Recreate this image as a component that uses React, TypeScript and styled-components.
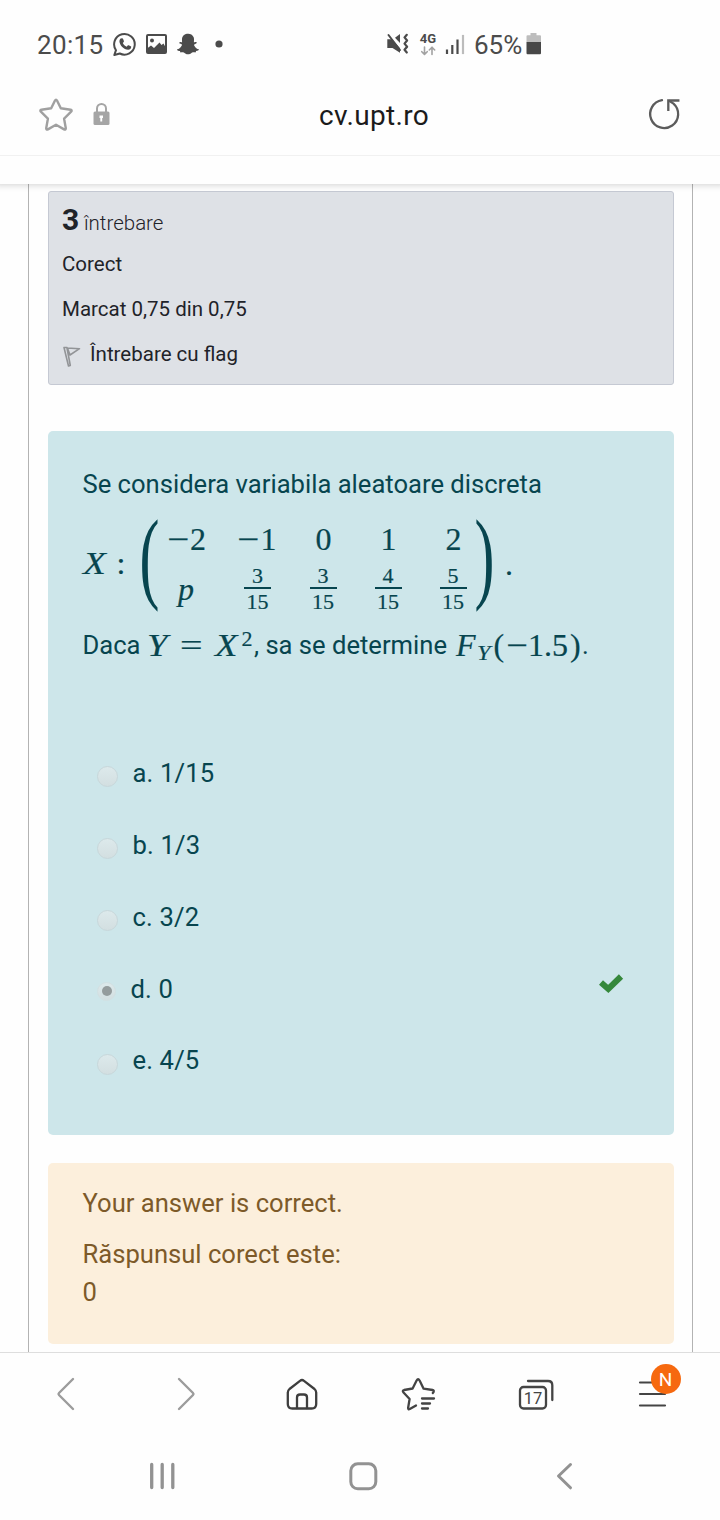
import React from "react";
import styled, { createGlobalStyle } from "styled-components";
import { FaSnapchatGhost } from "react-icons/fa";

const GlobalStyle = createGlobalStyle`
  * { box-sizing: border-box; }
  body { margin: 0; background: #fefefe; font-family: Roboto, "Liberation Sans", sans-serif; }
`;

const Screen = styled.div`
  width: 720px;
  height: 1520px;
  display: flex;
  flex-direction: column;
  overflow: hidden;
  background: #fefefe;
`;

const StatusBar = styled.div`
  height: 88px;
  flex: none;
  display: flex;
  align-items: center;
  padding-left: 37px;
  color: #4b4b4b;
`;

const StatusText = styled.span<{ $w: number; $ls?: number; $ml?: number }>`
  width: ${(p) => p.$w}px;
  margin: 2px 0 0 ${(p) => p.$ml ?? 0}px;
  font-size: 26px;
  line-height: 30px;
  letter-spacing: ${(p) => p.$ls ?? 0}px;
  white-space: nowrap;
`;

const Svg = styled.svg<{ $ml?: number }>`
  display: block;
  flex: none;
  margin-left: ${(p) => p.$ml ?? 0}px;
  fill: none;
  stroke-linecap: round;
  stroke-linejoin: round;
`;

const SnapIcon = styled(FaSnapchatGhost)`
  flex: none;
  width: 24px;
  height: 22px;
  margin: 0 0 0 8px;
`;

const Network = styled.div`
  width: 20px;
  height: 24px;
  margin: 0 2px 0 8px;
  display: flex;
  flex-direction: column;
  align-items: center;
  font-size: 13px;
  font-weight: 700;
  line-height: 13px;
`;

const AddressBar = styled.div`
  height: 67px;
  flex: none;
  display: flex;
  align-items: flex-start;
  padding: 8px 0 0 36px;
`;

const Address = styled.span`
  width: 112px;
  margin-left: 207px;
  font-size: 28px;
  line-height: 40px;
  letter-spacing: 0.35px;
  color: #1b1b1b;
  white-space: nowrap;
`;

const ToolbarEdge = styled.div`
  height: 29px;
  flex: none;
  margin: 0 -10px;
  border-top: 1px solid #f1f1f1;
  box-shadow: 0 6px 7px -5px rgba(0, 0, 0, 0.18);
  background: #fefefe;
  position: relative;
`;

const Page = styled.main`
  height: 1168px;
  flex: none;
  margin: 0 27px 0 28px;
  padding: 7px 18px 0 18px;
  border: solid #b3b3b3;
  border-width: 0 1px;
`;

const InfoPanel = styled.section`
  height: 194px;
  margin-left: 0.5px;
  padding: 6px 13.5px;
  border: 1px solid #c5c9d3;
  border-radius: 3px;
  background: #dee1e6;
  color: #1f2329;
  font-size: 20.5px;
`;

const InfoLine = styled.div`
  height: 45px;
  line-height: 45px;
  display: flex;
  align-items: center;
  white-space: nowrap;
`;

const InfoTitle = styled.div`
  height: 44px;
  line-height: 43px;
  white-space: nowrap;
`;

const QuestionNumber = styled.b`
  display: inline-block;
  width: 22px;
  font-size: 30px;
`;

const QuestionLabel = styled.span`
  font-weight: 300;
`;

const QuestionPanel = styled.section`
  height: 704px;
  margin: 46px 0 0 1px;
  padding: 33px 34.5px 0;
  border-radius: 5px;
  background: #cde6ea;
  color: #07454f;
  font-size: 25.6px;
`;

const Line = styled.div<{ $h: number }>`
  height: ${(p) => p.$h}px;
  line-height: ${(p) => p.$h}px;
  white-space: nowrap;
  display: flex;
  align-items: baseline;
`;

const Piece = styled.span<{ $w: number }>`
  width: ${(p) => p.$w}px;
  flex: none;
`;

const MathPiece = styled(Piece)<{ $italic?: boolean; $size?: number; $shift?: number; $stretch?: number }>`
  font-family: "Liberation Serif", serif;
  font-style: ${(p) => (p.$italic ? "italic" : "normal")};
  font-size: ${(p) => p.$size ?? 32}px;
  line-height: 1;
  -webkit-text-stroke: 0.2px currentColor;
  transform-origin: 0 50%;
  transform: translateY(${(p) => p.$shift ?? 1.5}px) scaleX(${(p) => p.$stretch ?? 1});
`;

const MatrixRow = styled.div`
  height: 122px;
  display: flex;
  align-items: center;
`;

const Paren = styled.span`
  width: 24px;
  height: 122px;
  flex: none;
  display: flex;
  justify-content: center;
  font-family: "Liberation Serif", serif;
  font-size: 52px;
  line-height: 122px;
  transform: translate(-2.5px, -8.5px) scale(1.15, 1.96);
`;

const Matrix = styled.div`
  width: 308px;
  height: 94px;
  margin: 4px 0 0 3px;
  flex: none;
  display: grid;
  grid-template-columns: 70.5px 65.5px 65px 65px 42px;
  grid-template-rows: 38px 56px;
  font-family: "Liberation Serif", serif;
  font-size: 32px;
  -webkit-text-stroke: 0.2px currentColor;
`;

const Cell = styled.div<{ $italic?: boolean }>`
  width: 42px;
  line-height: 38px;
  text-align: center;
  white-space: nowrap;
  font-style: ${(p) => (p.$italic ? "italic" : "normal")};
  padding-top: ${(p) => (p.$italic ? 12 : 0)}px;
  padding-right: ${(p) => (p.$italic ? 3 : 0)}px;
`;

const Minus = styled.span`
  display: inline-block;
  margin-right: 3px;
  transform: scaleX(1.22);
`;

const Fraction = styled.div`
  width: 27px;
  margin: 7px 0 0 7px;
  font-size: 22px;
  line-height: 22px;
  text-align: center;
`;

const Denominator = styled.div`
  border-top: 2px solid #07454f;
  padding-top: 2px;
`;

const Period = styled(MathPiece)`
  margin-left: 6.5px;
`;

const Answers = styled.div`
  margin-top: 72px;
`;

const AnswerRow = styled.label`
  height: 71.8px;
  padding-left: 14.5px;
  display: flex;
  align-items: center;
`;

const Radio = styled.span<{ $checked: boolean }>`
  width: ${(p) => (p.$checked ? 19 : 21)}px;
  height: ${(p) => (p.$checked ? 19 : 21)}px;
  margin-top: ${(p) => (p.$checked ? 6 : 8)}px;
  border-radius: 50%;
  border: 1px solid ${(p) => (p.$checked ? "#d2e0e2" : "#c8d7da")};
  background: linear-gradient(#dce9eb, #d3dfe1);
  display: flex;
  align-items: center;
  justify-content: center;
  &::after {
    content: "";
    width: 10px;
    height: 10px;
    border-radius: 50%;
    background: ${(p) => (p.$checked ? "#949c9d" : "transparent")};
  }
`;

const AnswerText = styled.span`
  margin-left: 14.5px;
  width: 84px;
  padding-top: 0.6px;
  letter-spacing: 0.15px;
  white-space: nowrap;
`;

const CheckMark = styled.span`
  margin: 0 0 9px 382px;
`;

const FeedbackPanel = styled.section`
  height: 181px;
  margin: 28px 0 0 1px;
  padding: 21px 34.5px;
  border-radius: 5px;
  background: #fcefdc;
  color: #7d5a29;
  font-size: 25.6px;
`;

const BottomBar = styled.nav`
  height: 86px;
  flex: none;
  border-top: 1px solid #dedede;
  padding: 17px 0 0 50px;
  display: flex;
`;

const MenuButton = styled.div`
  position: relative;
  margin-left: 80px;
  width: 48px;
  height: 44px;
`;

const Badge = styled.span`
  position: absolute;
  left: 14.5px;
  top: -6px;
  width: 30px;
  height: 30px;
  border-radius: 50%;
  background: #f6690f;
  color: #fff;
  font-size: 19px;
  line-height: 31px;
  text-align: center;
`;

const TabCount = styled.text`
  font: 16.5px Roboto, sans-serif;
  fill: #444;
  stroke: none;
`;

const SystemBar = styled.div`
  height: 82px;
  flex: none;
  padding: 22px 0 0 146px;
  display: flex;
`;

type IconProps = {
  box: [number, number, number, number];
  ml?: number;
  color: string;
  sw?: number;
  children: React.ReactNode;
};

const Icon = ({ box, ml, color, sw = 2, children }: IconProps) => (
  <Svg width={box[2]} height={box[3]} viewBox={box.join(" ")} $ml={ml} stroke={color} strokeWidth={sw}>
    {children}
  </Svg>
);

const topRow = [
  { negative: true, digit: "2" },
  { negative: true, digit: "1" },
  { digit: "0" },
  { digit: "1" },
  { digit: "2" },
];
const numerators = ["3", "3", "4", "5"];
const answers = [
  { text: "a. 1/15" },
  { text: "b. 1/3" },
  { text: "c. 3/2" },
  { text: "d. 0", checked: true },
  { text: "e. 4/5" },
];

export default function App() {
  return (
    <Screen>
      <GlobalStyle />
      <StatusBar>
        <StatusText $w={75} $ls={0.35}>20:15</StatusText>
        <Icon box={[112, 32, 26, 24]} color="#4b4b4b">
          <path d="M116 50.2A10.3 10.3 0 1 1 119.8 53.5L114.3 55Z" />
          <path
            d="M120.6 38.6l1.5-.4c.5 0 .8.2 1 .7l.8 2c.1.4 0 .7-.2 1l-.9 1.1c.9 1.8 2 2.8 3.9 3.7l1-1.2c.3-.3.6-.4 1-.2l2 .9c.4.2.6.5.5.9-.2 1.8-1.3 2.7-3 2.7-4.5-.2-8.5-4.3-8.8-8.5 0-1.2.4-2.1 1.2-2.7z"
            fill="#4b4b4b"
            stroke="none"
          />
        </Icon>
        <Icon box={[145, 33, 23, 22]} color="#4b4b4b" ml={7}>
          <rect x="147" y="35" width="19" height="18" rx="1" />
          <circle cx="152" cy="40.5" r="2" fill="#4b4b4b" stroke="none" />
          <path d="M147 53v-4.500l4-3 3 2.500 5.500-5.500 2 2.500 2-1.500 2.500 4.500v5z" fill="#4b4b4b" stroke="none" />
        </Icon>
        <SnapIcon />
        <Icon box={[214, 39, 10, 10]} color="none" ml={14}>
          <circle cx="219" cy="44" r="3.6" fill="#4b4b4b" />
        </Icon>
        <Icon box={[386, 32, 24, 24]} color="#4b4b4b" ml={162}>
          <path d="M387.300 39.300h4.700l8 9v4.500l-7.500-4.800h-5.200z" fill="#4b4b4b" stroke="none" />
          <path d="M395 37.800l5-3.800v9z" fill="#4b4b4b" stroke="none" />
          <path d="M388.500 35l11.500 15" />
          <path d="M406.800 34.800l-2.300 2.600 2.600 3.100-2.600 3.100 2.600 3.100-2.600 3.100 2.300 2.700" strokeWidth="2.2" />
        </Icon>
        <Network>
          4G
          <Icon box={[420, 45, 17, 11]} color="#a2a2a2" sw={1.6}>
            <path d="M424.500 47v7M421.800 51.700l2.700 2.800 2.700-2.800M432 54.500v-7M429.300 50l2.700-2.800 2.700 2.800" />
          </Icon>
        </Network>
        <Icon box={[445, 33, 21, 22]} color="#4b4b4b" ml={5} sw={2.2}>
          <path d="M447 50.500v2.500M452.300 46v7M457.500 40.500v12.500" strokeLinecap="square" />
          <path d="M463 36v17" stroke="#bcbcbc" strokeLinecap="square" />
        </Icon>
        <StatusText $w={53} $ml={8}>65%</StatusText>
        <Icon box={[526, 33, 16, 22]} color="none" ml={-1}>
          <path d="M530.500 33h6v2.200h3.500q1 0 1 1v6h-14.500v-6q0-1 1-1h3z" fill="#bdbdbd" />
          <path d="M526.500 42h14.500v11q0 1.200-1 1.200h-12.500q-1 0-1-1.200z" fill="#474747" />
        </Icon>
      </StatusBar>

      <AddressBar>
        <Icon box={[36, 96, 40, 36]} color="#a0a0a0" sw={2.4}>
          <path d="M55 100.500q1-1.800 2 0l3.800 7.700 9.800 1.500q1.800.5.500 2l-7 7 1.700 9.500q0 1.900-1.700 1.200L56 124.700l-8.100 4.700q-1.700.7-1.700-1.200l1.700-9.500-7-7q-1.300-1.500.5-2l9.800-1.500z" />
        </Icon>
        <Icon box={[92, 96, 20, 36]} color="#a5a5a5" ml={16}>
          <path d="M97 112v-3.500a4.500 4.500 0 0 1 9 0v3.500" />
          <rect x="93.5" y="111.5" width="16" height="13.5" rx="1.5" fill="#a5a5a5" stroke="none" />
          <path d="M99.500 115.500h3.500v2.500h-.8v3.500h-1.900v-3.500h-.8z" fill="#fff" stroke="none" />
        </Icon>
        <Address>cv.upt.ro</Address>
        <Icon box={[647, 96, 36, 36]} color="#5c5c5c" ml={216} sw={2.3}>
          <path d="M662 100.200A14 14 0 1 0 673.500 103.600L669.500 101" />
          <path d="M678.300 100.500h-10v9.300" strokeLinecap="square" strokeLinejoin="miter" />
        </Icon>
      </AddressBar>
      <ToolbarEdge />

      <Page>
        <InfoPanel>
          <InfoTitle>
            <QuestionNumber>3</QuestionNumber>
            <QuestionLabel>întrebare</QuestionLabel>
          </InfoTitle>
          <InfoLine>Corect</InfoLine>
          <InfoLine>Marcat 0,75 din 0,75</InfoLine>
          <InfoLine>
            <Icon box={[62, 343, 28, 24]} color="#929497" sw={1.6}>
              <path d="M64 347.500l4.500 18.500 1.800-.5-3.300-17.500 12.500.7-9.500 6.300-2.500-6.800M64 347.500h3" />
            </Icon>
            Întrebare cu flag
          </InfoLine>
        </InfoPanel>

        <QuestionPanel>
          <Line $h={40}>Se considera variabila aleatoare discreta</Line>
          <MatrixRow>
            <MathPiece $w={34} $italic $shift={-2} $stretch={1.17}>X</MathPiece>
            <MathPiece $w={23} $shift={-2}>:</MathPiece>
            <Paren>(</Paren>
            <Matrix>
              {topRow.map((entry, i) => (
                <Cell key={i}>
                  {entry.negative && <Minus>−</Minus>}
                  {entry.digit}
                </Cell>
              ))}
              <Cell $italic>p</Cell>
              {numerators.map((value, i) => (
                <Fraction key={i}>
                  {value}
                  <Denominator>15</Denominator>
                </Fraction>
              ))}
            </Matrix>
            <Paren>)</Paren>
            <Period $w={10} $shift={-1}>.</Period>
          </MatrixRow>
          <Line $h={39}>
            <Piece $w={64}>Daca</Piece>
            <MathPiece $w={33} $italic $stretch={1.15}>Y</MathPiece>
            <MathPiece $w={35} $stretch={1.25}>=</MathPiece>
            <MathPiece $w={27} $italic $stretch={1.15}>X</MathPiece>
            <MathPiece $w={12.5} $size={22} $shift={-8}>2</MathPiece>
            <Piece $w={202}>, sa se determine</Piece>
            <MathPiece $w={20.5} $italic>F</MathPiece>
            <MathPiece $w={17} $italic $size={22} $shift={6} $stretch={1.1}>Y</MathPiece>
            <MathPiece $w={12}>(</MathPiece>
            <MathPiece $w={22.5} $stretch={1.2}>−</MathPiece>
            <MathPiece $w={42}>1.5</MathPiece>
            <MathPiece $w={12}>)</MathPiece>
            <Piece $w={8}>.</Piece>
          </Line>
          <Answers>
            {answers.map((answer) => (
              <AnswerRow key={answer.text}>
                <Radio $checked={!!answer.checked} />
                <AnswerText>{answer.text}</AnswerText>
                {answer.checked && (
                  <CheckMark>
                    <Icon box={[597, 973, 28, 24]} color="#35883b" sw={6}>
                      <path d="M601 983.500l7.300 6.500 12.700-12.500" strokeLinecap="butt" strokeLinejoin="miter" />
                    </Icon>
                  </CheckMark>
                )}
              </AnswerRow>
            ))}
          </Answers>
        </QuestionPanel>

        <FeedbackPanel>
          <Line $h={38}>Your answer is correct.</Line>
          <Line $h={64}>Răspunsul corect este:</Line>
          <Line $h={12}>0</Line>
        </FeedbackPanel>
      </Page>

      <BottomBar>
        <Icon box={[50, 1370, 30, 44]} color="#9c9c9c" sw={2.4}>
          <path d="M73 1379l-14 14q-1 1 0 2l14 14" />
        </Icon>
        <Icon box={[172, 1370, 30, 44]} color="#9c9c9c" ml={92} sw={2.4}>
          <path d="M179 1379l14 14q1 1 0 2l-14 14" />
        </Icon>
        <Icon box={[284, 1370, 36, 44]} color="#3e3e3e" ml={82} sw={2.3}>
          <path d="M300 1380.800q2-1.500 4 0l10.500 8.200q1.700 1.500 1.700 3.500v11.500q0 4.500-4.500 4.500h-19.400q-4.500 0-4.500-4.500v-11.500q0-2 1.700-3.500z" />
          <path d="M297 1408v-10.500q0-3 3-3h4q3 0 3 3v10.500" />
        </Icon>
        <Icon box={[400, 1370, 36, 44]} color="#444" ml={80} sw={2.3}>
          <path d="M432.800 1393l.8-1q.6-1.800-1-2l-9-1.300-4-8.200q-1.500-2.500-3 0l-4 8-8.500 1.500q-2 .5-.8 2.200l6.300 6.800-1.500 9q0 1.800 1.700 1l6.200-3.500" />
          <path d="M422 1398.500h12M422 1403.500h8M422 1408.500h6" />
        </Icon>
        <Icon box={[516, 1370, 40, 44]} color="#444" ml={80} sw={2.3}>
          <rect x="520" y="1387" width="26" height="21.5" rx="3.5" />
          <path d="M528 1381h20q4.300 0 4.300 4.300v14.700" />
          <TabCount x="533" y="1403.5" textAnchor="middle">17</TabCount>
        </Icon>
        <MenuButton>
          <Icon box={[636, 1370, 48, 44]} color="#444" sw={2.2}>
            <path d="M640 1382.500h25M640 1394h25M640 1405.500h25" />
          </Icon>
          <Badge>N</Badge>
        </MenuButton>
      </BottomBar>
      <SystemBar>
        <Icon box={[146, 1460, 32, 32]} color="#929292" sw={3.3}>
          <path d="M151.700 1464.500v23M162.200 1464.500v23M172.800 1464.500v23" />
        </Icon>
        <Icon box={[347, 1460, 34, 32]} color="#929292" ml={169} sw={3}>
          <rect x="350.8" y="1463.8" width="25" height="25" rx="7" />
        </Icon>
        <Icon box={[552, 1460, 26, 32]} color="#929292" ml={171} sw={3}>
          <path d="M570.500 1464.500l-12 11.500 12 11.800" />
        </Icon>
      </SystemBar>
    </Screen>
  );
}
